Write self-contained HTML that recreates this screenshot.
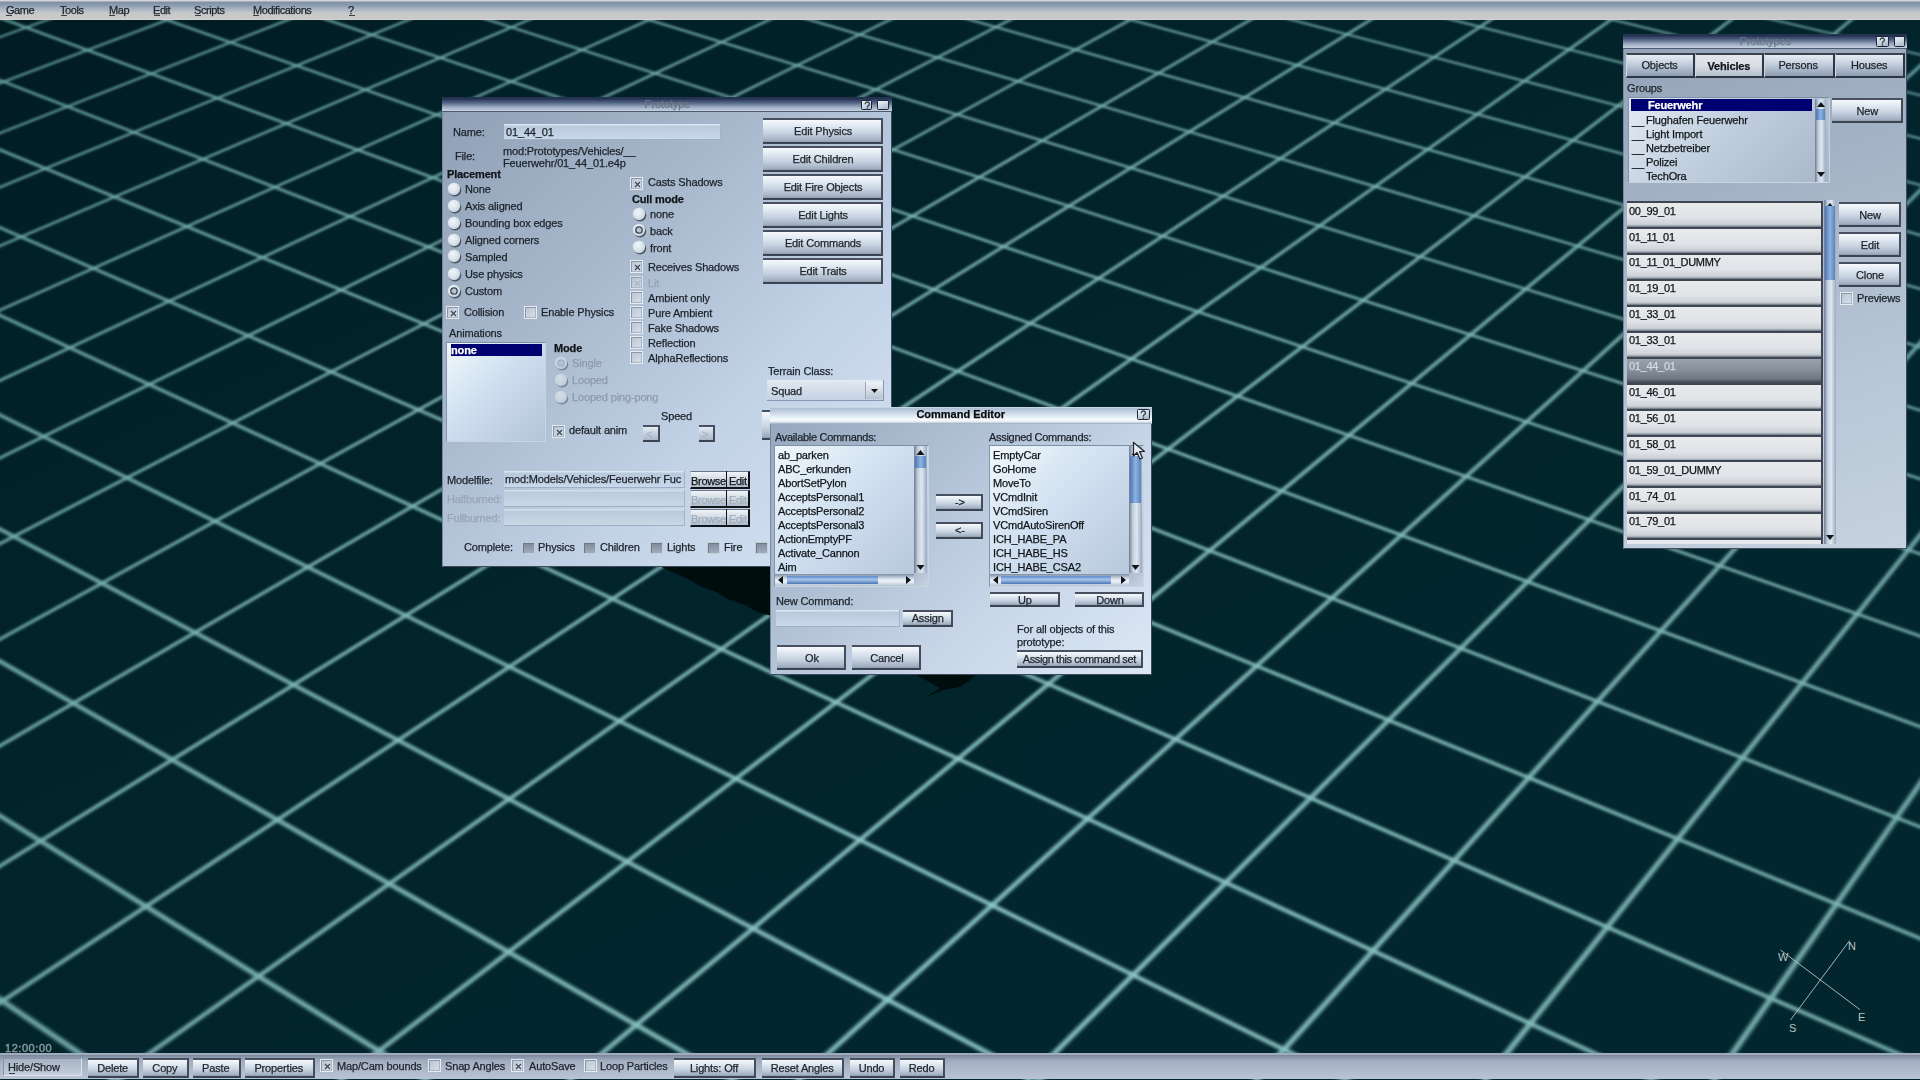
<!DOCTYPE html><html><head><meta charset="utf-8"><style>*{margin:0;padding:0;box-sizing:border-box}
html,body{width:1920px;height:1080px;overflow:hidden}
body{position:relative;background:#01202a;font-family:"Liberation Sans",sans-serif;font-size:11px;color:#1c222a}
.a{position:absolute}
.t{position:absolute;white-space:nowrap;letter-spacing:-0.15px}
#bg{position:absolute;left:0;top:0}
#menubar{position:absolute;left:0;top:0;width:1920px;height:20px;background:linear-gradient(#d4d8dc 0px,#d0d4da 1px,#7e8ea6 2px,#8a9ab0 5px,#a8b4c2 9px,#c2c9cc 13px,#c8c8c8 14px,#cacaca 19px,#d8dcdc 20px)}
#toolbar{position:absolute;left:0;top:1053px;width:1920px;height:26px;background:linear-gradient(#a4aebc 0px,#a0aab8 1.5px,#7a8aa0 2.5px,#8896aa 4px,#a2aec0 8px,#aab6c8 50%,#b8c4d4 100%)}
.win{position:absolute;background:linear-gradient(135deg,#8fa0b6 0%,#a8b8cc 35%,#c2d2e6 65%,#d6e4f4 100%);border-left:1px solid #7a889c;border-right:1px solid #3c4c62;border-bottom:1px solid #404a5c}
.tbar{position:absolute;background:linear-gradient(#2e405a 0px,#1c2a48 1px,#56678a 6px,#9aaac0 10px,#c6d2e2 14px,#4c5a72 14px,#4c5a72 15px)}
.tbar.act{background:linear-gradient(#e6ecf2 0px,#aebed4 1px,#c4d2e2 5px,#e6f0f6 10px,#fafcfc 13px,#e0e8f0 15px,#b8c6d6 16px,#98a8be 17px)}
.btn{border-top:2px solid #485060;border-bottom:2px solid #3c4452;border-right:2px solid #444c5a;
 background:linear-gradient(#f6f9fc 0%,#e2eaf2 25%,#c6d2e0 60%,#a2b0c2 92%,#8c9aae 100%)}
.tbtn{border:1px solid #1e2636;border-radius:1.5px;background:linear-gradient(160deg,#eef4f8,#c4d0dc 60%,#a4b4c8)}
.inp{background:linear-gradient(#dde6ee 0px,#dde6ee 1px,#b9c9dc 2px,#c9d8ea 100%);border-right:1px solid #a4b4c8;border-bottom:1px solid #a0b0c4}
.inp.dis{background:linear-gradient(#d4dde8 0px,#d4dde8 1px,#bccbdc 2px,#c8d6e6 100%)}
.cb{border:1px solid #e6ecf2;box-shadow:inset 1px 1px 0 #8c96a4, inset -1px -1px 0 #aab4c2;background:linear-gradient(135deg,#b8c4d2,#d8e2ec)}
.cb.dis{opacity:0.75}
.cbf{border:1px solid #c4ced8;box-shadow:inset 1px 1px 0 #6e7886;background:linear-gradient(#7e8a9a,#a2acba)}
.list{background:linear-gradient(135deg,#f0f8fc 0%,#cfdff0 45%,#b4c4d8 100%);border-top:1px solid #7e8ea4;border-left:1px solid #8494aa;border-right:1px solid #c8d4e2;border-bottom:1px solid #c8d4e2}
.sel{background:#000070}
.vsb{background:linear-gradient(90deg,#6c7c94,#c4d0de 30%,#dfe8f2 60%,#9aa8bc)}
.thumb{background:linear-gradient(90deg,#4d76b4,#8eb2e0 50%,#5a84c0)}
.hthumb{background:linear-gradient(#5d8ac8,#a6c4ea 45%,#4a78b8)}
.hsb{background:linear-gradient(#7d8ca2,#d8e2ee 40%,#f0f4fa 60%,#b4c2d2)}
.item{border-top:2px solid #3e4654;border-right:2px solid #3e4654;background:linear-gradient(#e8eaec 0%,#e0e3e7 60%,#cdd2d8 88%,#9aa2ac 96%,#5a6270 100%)}
.item.on{background:linear-gradient(#9aa2ae 0%,#848c98 50%,#6c7480 85%,#505866 92%,#404854 100%)}
.tab{border-top:2px solid #3a4250;border-right:2px solid #2e3644;border-bottom:2px solid #2e3644;border-left:1px solid #d0d8e2;background:linear-gradient(#e6ecf2 0%,#c2cedc 45%,#8e9cb2 100%)}
.tab.on{background:linear-gradient(#e4e6e8 0%,#d8dee6 50%,#b4c0ce 100%)}
.t{will-change:transform;-webkit-text-stroke:0.25px currentColor}
</style></head><body>
<svg id="bg" width="1920" height="1080" viewBox="0 0 1920 1080"><defs><linearGradient id="bgg" gradientUnits="userSpaceOnUse" x1="0" y1="0" x2="500" y2="1100"><stop offset="0" stop-color="#011b21"/><stop offset="0.25" stop-color="#012128"/><stop offset="1" stop-color="#02262d"/></linearGradient><filter id="blur2" x="-5%" y="-5%" width="110%" height="110%"><feGaussianBlur stdDeviation="2.2"/></filter><linearGradient id="mg" gradientUnits="userSpaceOnUse" x1="0" y1="300" x2="0" y2="1080"><stop offset="0" stop-color="#000"/><stop offset="1" stop-color="#fff"/></linearGradient><mask id="m" maskUnits="userSpaceOnUse" x="0" y="0" width="1920" height="1080"><rect width="1920" height="1080" fill="url(#mg)"/></mask><filter id="blur" x="-5%" y="-5%" width="110%" height="110%"><feGaussianBlur stdDeviation="0.8"/></filter><filter id="sblur"><feGaussianBlur stdDeviation="0.7"/></filter><radialGradient id="rg" cx="0.4" cy="0.35" r="0.7"><stop offset="0" stop-color="#f2f6fa"/><stop offset="0.7" stop-color="#d6e0ea"/><stop offset="1" stop-color="#b8c4d2"/></radialGradient><radialGradient id="lg" gradientUnits="userSpaceOnUse" cx="1000" cy="950" r="1400"><stop offset="0" stop-color="#90caca"/><stop offset="0.6" stop-color="#7cb2b2"/><stop offset="1" stop-color="#66a2a2"/></radialGradient></defs><rect width="1920" height="1080" fill="url(#bgg)"/><g filter="url(#blur)" fill="url(#lg)"><polygon opacity="0.30" points="11.6,-11.3 -30.5,3.4 -29.5,6.1 12.6,-8.7"/>
<polygon opacity="0.80" points="11.8,-10.8 -30.3,3.9 -29.7,5.6 12.4,-9.2"/>
<polygon opacity="0.30" points="128.9,-11.4 -30.5,46.5 -29.5,49.4 129.9,-8.6"/>
<polygon opacity="0.80" points="129.1,-10.9 -30.3,47.1 -29.7,48.8 129.8,-9.1"/>
<polygon opacity="0.30" points="246.2,-11.4 -30.6,93.0 -29.4,96.0 247.3,-8.6"/>
<polygon opacity="0.80" points="246.4,-10.9 -30.3,93.6 -29.7,95.4 247.1,-9.1"/>
<polygon opacity="0.30" points="363.5,-11.4 -30.6,143.3 -29.4,146.4 364.6,-8.6"/>
<polygon opacity="0.80" points="363.7,-10.9 -30.4,143.9 -29.6,145.8 364.4,-9.1"/>
<polygon opacity="0.30" points="480.8,-11.4 -30.7,197.8 -29.3,201.0 481.9,-8.6"/>
<polygon opacity="0.80" points="481.0,-10.9 -30.4,198.4 -29.6,200.3 481.7,-9.1"/>
<polygon opacity="0.30" points="598.0,-11.5 -30.7,257.0 -29.3,260.4 599.2,-8.5"/>
<polygon opacity="0.80" points="598.2,-10.9 -30.4,257.7 -29.6,259.7 599.0,-9.1"/>
<polygon opacity="0.30" points="715.2,-11.5 -30.8,321.7 -29.2,325.3 716.5,-8.5"/>
<polygon opacity="0.80" points="715.5,-10.9 -30.5,322.5 -29.5,324.5 716.3,-9.1"/>
<polygon opacity="0.30" points="832.4,-11.5 -30.9,392.6 -29.1,396.4 833.8,-8.5"/>
<polygon opacity="0.80" points="832.7,-10.9 -30.5,393.4 -29.5,395.6 833.5,-9.1"/>
<polygon opacity="0.30" points="949.5,-11.5 -31.0,470.7 -29.0,474.7 951.0,-8.5"/>
<polygon opacity="0.80" points="949.8,-10.9 -30.6,471.6 -29.4,473.8 950.7,-9.1"/>
<polygon opacity="0.30" points="1066.6,-11.6 -31.1,557.1 -28.9,561.4 1068.3,-8.4"/>
<polygon opacity="0.80" points="1067.0,-10.9 -30.6,558.1 -29.4,560.4 1067.9,-9.1"/>
<polygon opacity="0.30" points="1183.7,-11.6 -31.3,653.2 -28.7,657.8 1185.5,-8.4"/>
<polygon opacity="0.80" points="1184.1,-10.9 -30.7,654.3 -29.3,656.7 1185.1,-9.1"/>
<polygon opacity="0.30" points="1300.8,-11.6 -31.4,760.8 -28.6,765.7 1302.7,-8.4"/>
<polygon opacity="0.80" points="1301.2,-11.0 -30.8,761.9 -29.2,764.5 1302.3,-9.0"/>
<polygon opacity="0.30" points="1417.8,-11.7 -31.6,882.0 -28.4,887.3 1419.9,-8.3"/>
<polygon opacity="0.80" points="1418.3,-11.0 -30.9,883.2 -29.1,886.0 1419.5,-9.0"/>
<polygon opacity="0.30" points="1534.8,-11.7 -31.9,1019.6 -28.1,1025.3 1537.1,-8.3"/>
<polygon opacity="0.80" points="1535.3,-11.0 -31.0,1021.0 -29.0,1023.9 1536.6,-9.0"/>
<polygon opacity="0.30" points="1651.8,-11.7 67.2,1107.0 71.5,1113.0 1654.3,-8.3"/>
<polygon opacity="0.80" points="1652.4,-11.0 68.3,1108.5 70.4,1111.5 1653.7,-9.0"/>
<polygon opacity="0.30" points="1768.8,-11.7 299.1,1106.9 303.8,1113.1 1771.4,-8.3"/>
<polygon opacity="0.80" points="1769.3,-11.0 300.3,1108.5 302.6,1111.5 1770.8,-9.0"/>
<polygon opacity="0.30" points="1885.7,-11.7 531.0,1106.9 536.1,1113.1 1888.6,-8.3"/>
<polygon opacity="0.80" points="1886.3,-11.0 532.2,1108.5 534.8,1111.5 1887.9,-9.0"/>
<polygon opacity="0.30" points="1948.4,37.1 762.7,1106.9 768.4,1113.1 1951.6,40.8"/>
<polygon opacity="0.80" points="1949.1,38.0 764.2,1108.5 767.0,1111.5 1950.9,39.9"/>
<polygon opacity="0.30" points="1948.1,158.6 994.4,1106.9 1000.6,1113.1 1951.9,162.5"/>
<polygon opacity="0.80" points="1949.0,159.5 996.0,1108.5 999.1,1111.5 1951.0,161.6"/>
<polygon opacity="0.30" points="1947.7,307.8 1226.1,1106.9 1232.9,1113.1 1952.3,312.0"/>
<polygon opacity="0.80" points="1948.8,308.8 1227.8,1108.5 1231.2,1111.5 1951.2,311.0"/>
<polygon opacity="0.30" points="1947.2,495.4 1457.6,1107.0 1465.1,1113.0 1952.8,499.9"/>
<polygon opacity="0.80" points="1948.6,496.5 1459.5,1108.5 1463.2,1111.5 1951.4,498.8"/>
<polygon opacity="0.30" points="1946.5,738.3 1689.1,1107.1 1697.4,1112.9 1953.5,743.2"/>
<polygon opacity="0.80" points="1948.3,739.5 1691.2,1108.6 1695.3,1111.4 1951.7,741.9"/>
<polygon opacity="0.30" points="1945.6,1065.3 1920.6,1107.3 1929.6,1112.7 1954.4,1070.6"/>
<polygon opacity="0.80" points="1947.9,1066.7 1922.9,1108.7 1927.2,1111.3 1952.1,1069.2"/>
<polygon opacity="0.30" points="1803.8,-8.7 1949.7,24.9 1950.3,22.2 1804.4,-11.3"/>
<polygon opacity="0.80" points="1803.9,-9.2 1949.8,24.4 1950.2,22.7 1804.2,-10.8"/>
<polygon opacity="0.30" points="1647.3,-8.7 1949.7,63.1 1950.3,60.4 1648.0,-11.3"/>
<polygon opacity="0.80" points="1647.4,-9.2 1949.8,62.6 1950.2,60.9 1647.8,-10.8"/>
<polygon opacity="0.30" points="1490.9,-8.7 1949.6,104.0 1950.4,101.1 1491.5,-11.3"/>
<polygon opacity="0.80" points="1491.0,-9.1 1949.8,103.4 1950.2,101.6 1491.4,-10.9"/>
<polygon opacity="0.30" points="1334.3,-8.6 1949.6,147.6 1950.4,144.7 1335.0,-11.4"/>
<polygon opacity="0.80" points="1334.5,-9.1 1949.8,147.1 1950.2,145.2 1334.9,-10.9"/>
<polygon opacity="0.30" points="1177.8,-8.6 1949.6,194.5 1950.4,191.4 1178.5,-11.4"/>
<polygon opacity="0.80" points="1177.9,-9.1 1949.8,193.9 1950.2,192.0 1178.4,-10.9"/>
<polygon opacity="0.30" points="1021.2,-8.6 1949.6,244.8 1950.4,241.5 1022.0,-11.4"/>
<polygon opacity="0.80" points="1021.4,-9.1 1949.7,244.2 1950.3,242.2 1021.8,-10.9"/>
<polygon opacity="0.30" points="864.6,-8.5 1949.5,299.1 1950.5,295.6 865.4,-11.5"/>
<polygon opacity="0.80" points="864.7,-9.1 1949.7,298.4 1950.3,296.3 865.2,-10.9"/>
<polygon opacity="0.30" points="707.9,-8.5 1949.5,357.7 1950.5,354.1 708.8,-11.5"/>
<polygon opacity="0.80" points="708.1,-9.1 1949.7,356.9 1950.3,354.8 708.6,-10.9"/>
<polygon opacity="0.30" points="551.2,-8.5 1949.4,421.3 1950.6,417.5 552.1,-11.5"/>
<polygon opacity="0.80" points="551.4,-9.1 1949.7,420.5 1950.3,418.3 552.0,-10.9"/>
<polygon opacity="0.30" points="394.5,-8.4 1949.4,490.5 1950.6,486.4 395.5,-11.6"/>
<polygon opacity="0.80" points="394.7,-9.1 1949.6,489.6 1950.4,487.3 395.3,-10.9"/>
<polygon opacity="0.30" points="237.7,-8.4 1949.3,566.0 1950.7,561.7 238.7,-11.6"/>
<polygon opacity="0.80" points="237.9,-9.0 1949.6,565.1 1950.4,562.7 238.5,-11.0"/>
<polygon opacity="0.30" points="80.8,-8.4 1949.2,648.9 1950.8,644.3 82.0,-11.6"/>
<polygon opacity="0.80" points="81.1,-9.0 1949.6,647.8 1950.4,645.3 81.8,-11.0"/>
<polygon opacity="0.30" points="-30.6,8.5 1949.1,740.1 1950.9,735.2 -29.4,5.1"/>
<polygon opacity="0.80" points="-30.4,7.8 1949.5,739.0 1950.5,736.3 -29.6,5.8"/>
<polygon opacity="0.30" points="-30.7,70.5 1949.0,841.1 1951.0,835.8 -29.3,66.8"/>
<polygon opacity="0.80" points="-30.4,69.7 1949.5,839.9 1950.5,837.1 -29.6,67.6"/>
<polygon opacity="0.30" points="-30.8,139.5 1948.8,953.5 1951.2,947.8 -29.2,135.6"/>
<polygon opacity="0.80" points="-30.5,138.6 1949.4,952.2 1950.6,949.2 -29.5,136.4"/>
<polygon opacity="0.30" points="-30.9,216.7 1948.6,1079.4 1951.4,1073.2 -29.1,212.5"/>
<polygon opacity="0.80" points="-30.5,215.8 1949.3,1077.9 1950.7,1074.7 -29.5,213.5"/>
<polygon opacity="0.30" points="-31.0,303.8 1715.5,1113.3 1718.5,1106.7 -29.0,299.3"/>
<polygon opacity="0.80" points="-30.6,302.7 1716.2,1111.7 1717.7,1108.3 -29.4,300.3"/>
<polygon opacity="0.30" points="-31.2,402.7 1404.7,1113.4 1408.0,1106.6 -28.8,397.8"/>
<polygon opacity="0.80" points="-30.6,401.5 1405.5,1111.7 1407.2,1108.3 -29.4,398.9"/>
<polygon opacity="0.30" points="-31.4,516.0 1093.8,1113.5 1097.6,1106.5 -28.6,510.6"/>
<polygon opacity="0.80" points="-30.7,514.7 1094.8,1111.8 1096.6,1108.2 -29.3,511.9"/>
<polygon opacity="0.30" points="-31.7,647.1 782.9,1113.6 787.0,1106.4 -28.3,641.2"/>
<polygon opacity="0.80" points="-30.9,645.7 783.9,1111.8 786.0,1108.2 -29.1,642.6"/>
<polygon opacity="0.30" points="-32.0,800.6 471.8,1113.7 476.4,1106.3 -28.0,794.0"/>
<polygon opacity="0.80" points="-31.0,798.9 473.0,1111.8 475.3,1108.2 -29.0,795.6"/>
<polygon opacity="0.30" points="-32.5,982.6 160.6,1113.8 165.8,1106.2 -27.5,975.3"/>
<polygon opacity="0.80" points="-31.2,980.8 161.9,1111.9 164.5,1108.1 -28.8,977.2"/></g><g filter="url(#sblur)" fill="#000b0e"><polygon points="659.7,566 770,566 770,615.5 757,612 745,605 730,600 716,592 700,586 686,578 672,572"/><polygon points="915,674 977,674 969,681 961,686.5 944,690 927,696.5 940,688 931,683"/></g><g stroke="#b8c4c8" stroke-width="1" opacity="0.9"><line x1="1790.5" y1="1020" x2="1849.7" y2="940.5"/><line x1="1780.5" y1="950" x2="1860" y2="1009.7"/></g><g fill="#b8c4c8" font-family="Liberation Sans" font-size="11"><text x="1848" y="950">N</text><text x="1858" y="1021">E</text><text x="1789" y="1032">S</text><text x="1778" y="961">W</text></g></svg>
<div class="t " style="left:5.0px;top:1040.7px;font-size:11px;line-height:14px;color:#84949a;letter-spacing:0.55px;-webkit-text-stroke:0.5px #84949a;">12:00:00</div>
<div id="menubar"></div>
<div class="t " style="left:5.8px;top:2.5px;font-size:11px;line-height:14px;color:#20262e;letter-spacing:-0.45px;">Game</div>
<div class="a " style="left:6.3px;top:15.0px;width:6.0px;height:1.0px;background:#3a4048"></div>
<div class="t " style="left:60.0px;top:2.5px;font-size:11px;line-height:14px;color:#20262e;letter-spacing:-0.45px;">Tools</div>
<div class="a " style="left:60.5px;top:15.0px;width:6.0px;height:1.0px;background:#3a4048"></div>
<div class="t " style="left:108.8px;top:2.5px;font-size:11px;line-height:14px;color:#20262e;letter-spacing:-0.45px;">Map</div>
<div class="a " style="left:109.2px;top:15.0px;width:6.0px;height:1.0px;background:#3a4048"></div>
<div class="t " style="left:153.0px;top:2.5px;font-size:11px;line-height:14px;color:#20262e;letter-spacing:-0.45px;">Edit</div>
<div class="a " style="left:153.5px;top:15.0px;width:6.0px;height:1.0px;background:#3a4048"></div>
<div class="t " style="left:194.2px;top:2.5px;font-size:11px;line-height:14px;color:#20262e;letter-spacing:-0.45px;">Scripts</div>
<div class="a " style="left:194.7px;top:15.0px;width:6.0px;height:1.0px;background:#3a4048"></div>
<div class="t " style="left:252.7px;top:2.5px;font-size:11px;line-height:14px;color:#20262e;letter-spacing:-0.45px;">Modifications</div>
<div class="a " style="left:253.2px;top:15.0px;width:6.0px;height:1.0px;background:#3a4048"></div>
<div class="t " style="left:348.3px;top:2.5px;font-size:11px;line-height:14px;color:#20262e;letter-spacing:-0.45px;">?</div>
<div class="a " style="left:348.8px;top:15.0px;width:6.0px;height:1.0px;background:#3a4048"></div>
<div id="toolbar"></div>
<div class="a " style="left:2.5px;top:1058.0px;width:79.5px;height:18.0px;background:linear-gradient(#a6b2c4,#c4ceda);border-top:1px solid #8894a8;border-left:1px solid #8894a8;border-bottom:1px solid #dce4ec;border-right:1px solid #dce4ec"></div>
<div class="t " style="left:8.0px;top:1060.2px;font-size:11px;line-height:14px;color:#20262e;">Hide/Show</div>
<div class="a " style="left:8.5px;top:1073.0px;width:6.5px;height:1.0px;background:#3a4048"></div>
<div class="a btn" style="left:87.5px;top:1057.5px;width:51.2px;height:20.0px;"></div>
<div class="t" style="left:87.5px;top:1061.2px;width:49.2px;text-align:center;font-size:11px;line-height:14px;color:#20262e;">Delete</div>
<div class="a btn" style="left:143.0px;top:1057.5px;width:45.8px;height:20.0px;"></div>
<div class="t" style="left:143.0px;top:1061.2px;width:43.8px;text-align:center;font-size:11px;line-height:14px;color:#20262e;">Copy</div>
<div class="a btn" style="left:193.0px;top:1057.5px;width:47.5px;height:20.0px;"></div>
<div class="t" style="left:193.0px;top:1061.2px;width:45.5px;text-align:center;font-size:11px;line-height:14px;color:#20262e;">Paste</div>
<div class="a btn" style="left:245.0px;top:1057.5px;width:69.5px;height:20.0px;"></div>
<div class="t" style="left:245.0px;top:1061.2px;width:67.5px;text-align:center;font-size:11px;line-height:14px;color:#20262e;">Properties</div>
<div class="a btn" style="left:674.3px;top:1057.5px;width:82.1px;height:20.0px;"></div>
<div class="t" style="left:674.3px;top:1061.2px;width:80.1px;text-align:center;font-size:11px;line-height:14px;color:#20262e;">Lights: Off</div>
<div class="a btn" style="left:761.8px;top:1057.5px;width:82.3px;height:20.0px;"></div>
<div class="t" style="left:761.8px;top:1061.2px;width:80.3px;text-align:center;font-size:11px;line-height:14px;color:#20262e;">Reset Angles</div>
<div class="a btn" style="left:849.5px;top:1057.5px;width:45.0px;height:20.0px;"></div>
<div class="t" style="left:849.5px;top:1061.2px;width:43.0px;text-align:center;font-size:11px;line-height:14px;color:#20262e;">Undo</div>
<div class="a btn" style="left:899.9px;top:1057.5px;width:45.2px;height:20.0px;"></div>
<div class="t" style="left:899.9px;top:1061.2px;width:43.2px;text-align:center;font-size:11px;line-height:14px;color:#20262e;">Redo</div>
<div class="a cb" style="left:319.5px;top:1059.0px;width:13.0px;height:13.0px;"><svg width="13" height="13" style="position:absolute;left:0;top:0"><path d="M4 4L9 9M9 4L4 9" stroke="#3a4250" stroke-width="1.1"/></svg></div>
<div class="t " style="left:337.0px;top:1058.7px;font-size:11px;line-height:14px;color:#20262e;">Map/Cam bounds</div>
<div class="a cb" style="left:427.5px;top:1059.0px;width:13.0px;height:13.0px;"></div>
<div class="t " style="left:445.0px;top:1058.7px;font-size:11px;line-height:14px;color:#20262e;">Snap Angles</div>
<div class="a cb" style="left:511.0px;top:1059.0px;width:13.0px;height:13.0px;"><svg width="13" height="13" style="position:absolute;left:0;top:0"><path d="M4 4L9 9M9 4L4 9" stroke="#3a4250" stroke-width="1.1"/></svg></div>
<div class="t " style="left:528.8px;top:1058.7px;font-size:11px;line-height:14px;color:#20262e;">AutoSave</div>
<div class="a cb" style="left:583.6px;top:1059.0px;width:13.0px;height:13.0px;"></div>
<div class="t " style="left:600.3px;top:1058.7px;font-size:11px;line-height:14px;color:#20262e;">Loop Particles</div>
<div class="a win" style="left:441.5px;top:97.0px;width:450.5px;height:469.5px;"></div>
<div class="a tbar" style="left:441.5px;top:97.0px;width:450.5px;height:15.0px;"></div>
<div class="t" style="left:441.5px;top:96.7px;width:450.5px;text-align:center;font-size:11px;line-height:14px;color:#6a7484;">Prototype</div>
<div class="a tbtn" style="left:861.0px;top:99.5px;width:11.0px;height:10.3px;"><svg width="11" height="10" style="position:absolute;left:0;top:0"><path d="M3.2 3.2C3.2 1.6 4.2 1 5.3 1C6.6 1 7.4 1.8 7.4 2.9C7.4 4.1 6.3 4.5 5.6 5.2L5.4 6.6" fill="none" stroke="#3a4250" stroke-width="1.3"/><rect x="4.7" y="7.4" width="1.4" height="1.4" fill="#3a4250"/></svg></div>
<div class="a tbtn" style="left:877.0px;top:99.5px;width:12.0px;height:10.3px;"></div>
<div class="t " style="left:453.0px;top:124.8px;font-size:11px;line-height:14px;color:#1c222a;">Name:</div>
<div class="a inp" style="left:504.3px;top:124.3px;width:216.7px;height:15.7px;"></div>
<div class="t " style="left:505.5px;top:124.9px;font-size:11px;line-height:14px;color:#1c222a;">01_44_01</div>
<div class="t " style="left:454.8px;top:148.6px;font-size:11px;line-height:14px;color:#1c222a;">File:</div>
<div class="t " style="left:503.0px;top:143.6px;font-size:11px;line-height:14px;color:#1c222a;">mod:Prototypes/Vehicles/__</div>
<div class="t " style="left:503.0px;top:156.1px;font-size:11px;line-height:14px;color:#1c222a;">Feuerwehr/01_44_01.e4p</div>
<div class="t " style="left:447.0px;top:166.7px;font-size:11px;line-height:14px;color:#101418;font-weight:bold;">Placement</div>
<svg class="a" width="16" height="16" style="left:447.0px;top:182.1px;"><circle cx="8" cy="8.3" r="6.2" fill="#3a404a" opacity="0.85"/><circle cx="7" cy="7" r="6.2" fill="url(#rg)"/></svg>
<div class="t " style="left:465.0px;top:182.3px;font-size:11px;line-height:14px;color:#1c222a;">None</div>
<svg class="a" width="16" height="16" style="left:447.0px;top:198.9px;"><circle cx="8" cy="8.3" r="6.2" fill="#3a404a" opacity="0.85"/><circle cx="7" cy="7" r="6.2" fill="url(#rg)"/></svg>
<div class="t " style="left:465.0px;top:199.1px;font-size:11px;line-height:14px;color:#1c222a;">Axis aligned</div>
<svg class="a" width="16" height="16" style="left:447.0px;top:215.9px;"><circle cx="8" cy="8.3" r="6.2" fill="#3a404a" opacity="0.85"/><circle cx="7" cy="7" r="6.2" fill="url(#rg)"/></svg>
<div class="t " style="left:465.0px;top:216.1px;font-size:11px;line-height:14px;color:#1c222a;">Bounding box edges</div>
<svg class="a" width="16" height="16" style="left:447.0px;top:232.8px;"><circle cx="8" cy="8.3" r="6.2" fill="#3a404a" opacity="0.85"/><circle cx="7" cy="7" r="6.2" fill="url(#rg)"/></svg>
<div class="t " style="left:465.0px;top:233.0px;font-size:11px;line-height:14px;color:#1c222a;">Aligned corners</div>
<svg class="a" width="16" height="16" style="left:447.0px;top:249.3px;"><circle cx="8" cy="8.3" r="6.2" fill="#3a404a" opacity="0.85"/><circle cx="7" cy="7" r="6.2" fill="url(#rg)"/></svg>
<div class="t " style="left:465.0px;top:249.5px;font-size:11px;line-height:14px;color:#1c222a;">Sampled</div>
<svg class="a" width="16" height="16" style="left:447.0px;top:266.6px;"><circle cx="8" cy="8.3" r="6.2" fill="#3a404a" opacity="0.85"/><circle cx="7" cy="7" r="6.2" fill="url(#rg)"/></svg>
<div class="t " style="left:465.0px;top:266.8px;font-size:11px;line-height:14px;color:#1c222a;">Use physics</div>
<svg class="a" width="16" height="16" style="left:447.0px;top:283.9px;"><circle cx="8" cy="8.3" r="6.2" fill="#3a404a" opacity="0.85"/><circle cx="7" cy="7" r="6.2" fill="url(#rg)"/><circle cx="7" cy="7" r="3.2" fill="#b8c4d2" stroke="#3c4450" stroke-width="1.3"/></svg>
<div class="t " style="left:465.0px;top:284.1px;font-size:11px;line-height:14px;color:#1c222a;">Custom</div>
<div class="a cb" style="left:446.3px;top:306.0px;width:13.0px;height:13.0px;"><svg width="13" height="13" style="position:absolute;left:0;top:0"><path d="M4 4L9 9M9 4L4 9" stroke="#3a4250" stroke-width="1.1"/></svg></div>
<div class="t " style="left:464.0px;top:305.2px;font-size:11px;line-height:14px;color:#1c222a;">Collision</div>
<div class="a cb" style="left:523.5px;top:306.0px;width:13.0px;height:13.0px;"></div>
<div class="t " style="left:540.7px;top:305.2px;font-size:11px;line-height:14px;color:#1c222a;">Enable Physics</div>
<div class="t " style="left:448.5px;top:325.9px;font-size:11px;line-height:14px;color:#1c222a;">Animations</div>
<div class="a list" style="left:446.2px;top:342.1px;width:100.1px;height:99.7px;"></div>
<div class="a sel" style="left:450.6px;top:343.6px;width:91.8px;height:12.7px;"></div>
<div class="t " style="left:450.6px;top:342.7px;font-size:11px;line-height:14px;color:#ffffff;font-weight:bold;">none</div>
<div class="t " style="left:554.0px;top:340.6px;font-size:11px;line-height:14px;color:#101418;font-weight:bold;">Mode</div>
<svg class="a" width="16" height="16" style="left:554.0px;top:355.5px;opacity:0.55;"><circle cx="8" cy="8.3" r="6.2" fill="#3a404a" opacity="0.85"/><circle cx="7" cy="7" r="6.2" fill="url(#rg)"/><circle cx="7" cy="7" r="3.2" fill="#b8c4d2" stroke="#9aa4b2" stroke-width="1.3"/></svg>
<div class="t " style="left:572.0px;top:355.7px;font-size:11px;line-height:14px;color:#8e9aaa;">Single</div>
<svg class="a" width="16" height="16" style="left:554.0px;top:372.7px;opacity:0.55;"><circle cx="8" cy="8.3" r="6.2" fill="#3a404a" opacity="0.85"/><circle cx="7" cy="7" r="6.2" fill="url(#rg)"/></svg>
<div class="t " style="left:572.0px;top:372.9px;font-size:11px;line-height:14px;color:#8e9aaa;">Looped</div>
<svg class="a" width="16" height="16" style="left:554.0px;top:389.5px;opacity:0.55;"><circle cx="8" cy="8.3" r="6.2" fill="#3a404a" opacity="0.85"/><circle cx="7" cy="7" r="6.2" fill="url(#rg)"/></svg>
<div class="t " style="left:572.0px;top:389.7px;font-size:11px;line-height:14px;color:#8e9aaa;">Looped ping-pong</div>
<div class="t " style="left:661.0px;top:408.8px;font-size:11px;line-height:14px;color:#1c222a;">Speed</div>
<div class="a cb" style="left:551.6px;top:424.5px;width:13.0px;height:13.0px;"><svg width="13" height="13" style="position:absolute;left:0;top:0"><path d="M4 4L9 9M9 4L4 9" stroke="#3a4250" stroke-width="1.1"/></svg></div>
<div class="t " style="left:569.0px;top:423.2px;font-size:11px;line-height:14px;color:#1c222a;">default anim</div>
<div class="a btn" style="left:643.3px;top:424.5px;width:16.8px;height:17.3px;border-width:2px 2px 2px 0;background:linear-gradient(#e4ecf4,#a8b6c8)"><div class="t" style="left:3px;top:1px;font-size:11px;color:#a8b4c4">&lt;</div></div>
<div class="a btn" style="left:698.5px;top:424.5px;width:16.9px;height:17.3px;border-width:2px 2px 2px 0;background:linear-gradient(#e4ecf4,#a8b6c8)"><div class="t" style="left:3px;top:1px;font-size:11px;color:#a8b4c4">&gt;</div></div>
<div class="a cb" style="left:630.0px;top:176.5px;width:13.0px;height:13.0px;"><svg width="13" height="13" style="position:absolute;left:0;top:0"><path d="M4 4L9 9M9 4L4 9" stroke="#3a4250" stroke-width="1.1"/></svg></div>
<div class="t " style="left:647.8px;top:175.2px;font-size:11px;line-height:14px;color:#1c222a;">Casts Shadows</div>
<div class="t " style="left:632.2px;top:191.6px;font-size:11px;line-height:14px;color:#101418;font-weight:bold;">Cull mode</div>
<svg class="a" width="16" height="16" style="left:631.9px;top:206.8px;"><circle cx="8" cy="8.3" r="6.2" fill="#3a404a" opacity="0.85"/><circle cx="7" cy="7" r="6.2" fill="url(#rg)"/></svg>
<div class="t " style="left:650.0px;top:207.0px;font-size:11px;line-height:14px;color:#1c222a;">none</div>
<svg class="a" width="16" height="16" style="left:631.9px;top:223.4px;"><circle cx="8" cy="8.3" r="6.2" fill="#3a404a" opacity="0.85"/><circle cx="7" cy="7" r="6.2" fill="url(#rg)"/><circle cx="7" cy="7" r="3.2" fill="#b8c4d2" stroke="#3c4450" stroke-width="1.3"/></svg>
<div class="t " style="left:650.0px;top:223.6px;font-size:11px;line-height:14px;color:#1c222a;">back</div>
<svg class="a" width="16" height="16" style="left:631.9px;top:240.3px;"><circle cx="8" cy="8.3" r="6.2" fill="#3a404a" opacity="0.85"/><circle cx="7" cy="7" r="6.2" fill="url(#rg)"/></svg>
<div class="t " style="left:650.0px;top:240.5px;font-size:11px;line-height:14px;color:#1c222a;">front</div>
<div class="a cb" style="left:630.0px;top:260.2px;width:13.0px;height:13.0px;"><svg width="13" height="13" style="position:absolute;left:0;top:0"><path d="M4 4L9 9M9 4L4 9" stroke="#3a4250" stroke-width="1.1"/></svg></div>
<div class="t " style="left:647.8px;top:259.9px;font-size:11px;line-height:14px;color:#1c222a;">Receives Shadows</div>
<div class="a cb dis" style="left:630.0px;top:276.2px;width:13.0px;height:13.0px;"><svg width="13" height="13" style="position:absolute;left:0;top:0"><path d="M4 4L9 9M9 4L4 9" stroke="#a8b0bc" stroke-width="1.1"/></svg></div>
<div class="t " style="left:647.8px;top:275.9px;font-size:11px;line-height:14px;color:#98a4b2;">Lit</div>
<div class="a cb" style="left:630.0px;top:291.3px;width:13.0px;height:13.0px;"></div>
<div class="t " style="left:647.8px;top:291.0px;font-size:11px;line-height:14px;color:#1c222a;">Ambient only</div>
<div class="a cb" style="left:630.0px;top:306.2px;width:13.0px;height:13.0px;"></div>
<div class="t " style="left:647.8px;top:305.9px;font-size:11px;line-height:14px;color:#1c222a;">Pure Ambient</div>
<div class="a cb" style="left:630.0px;top:321.1px;width:13.0px;height:13.0px;"></div>
<div class="t " style="left:647.8px;top:320.8px;font-size:11px;line-height:14px;color:#1c222a;">Fake Shadows</div>
<div class="a cb" style="left:630.0px;top:335.9px;width:13.0px;height:13.0px;"></div>
<div class="t " style="left:647.8px;top:335.6px;font-size:11px;line-height:14px;color:#1c222a;">Reflection</div>
<div class="a cb" style="left:630.0px;top:351.3px;width:13.0px;height:13.0px;"></div>
<div class="t " style="left:647.8px;top:351.0px;font-size:11px;line-height:14px;color:#1c222a;">AlphaReflections</div>
<div class="a btn" style="left:762.5px;top:118.0px;width:120.1px;height:26.0px;"></div><div class="t" style="left:762.5px;top:124.2px;width:120.1px;text-align:center;font-size:11px;line-height:14px;color:#1c222a;">Edit Physics</div>
<div class="a btn" style="left:762.5px;top:146.0px;width:120.1px;height:26.0px;"></div><div class="t" style="left:762.5px;top:152.2px;width:120.1px;text-align:center;font-size:11px;line-height:14px;color:#1c222a;">Edit Children</div>
<div class="a btn" style="left:762.5px;top:174.0px;width:120.1px;height:26.0px;"></div><div class="t" style="left:762.5px;top:180.2px;width:120.1px;text-align:center;font-size:11px;line-height:14px;color:#1c222a;">Edit Fire Objects</div>
<div class="a btn" style="left:762.5px;top:202.0px;width:120.1px;height:26.0px;"></div><div class="t" style="left:762.5px;top:208.2px;width:120.1px;text-align:center;font-size:11px;line-height:14px;color:#1c222a;">Edit Lights</div>
<div class="a btn" style="left:762.5px;top:230.0px;width:120.1px;height:26.0px;"></div><div class="t" style="left:762.5px;top:236.2px;width:120.1px;text-align:center;font-size:11px;line-height:14px;color:#1c222a;">Edit Commands</div>
<div class="a btn" style="left:762.5px;top:258.0px;width:120.1px;height:26.0px;"></div><div class="t" style="left:762.5px;top:264.2px;width:120.1px;text-align:center;font-size:11px;line-height:14px;color:#1c222a;">Edit Traits</div>
<div class="t " style="left:767.8px;top:364.2px;font-size:11px;line-height:14px;color:#1c222a;">Terrain Class:</div>
<div class="a inp" style="left:766.7px;top:380.0px;width:117.3px;height:20.5px;background:linear-gradient(#e2eaf2,#c4d2e4);border-bottom:1px solid #8898b0;border-right:1px solid #8898b0"></div>
<div class="t " style="left:770.5px;top:383.7px;font-size:11px;line-height:14px;color:#1c222a;">Squad</div>
<div class="a " style="left:865.0px;top:381.5px;width:17.5px;height:17.5px;background:linear-gradient(#f0f4f8,#b8c4d2);border-left:1px solid #9aa8ba"><svg width="17" height="17" style="position:absolute;left:0;top:0"><path d="M5 7h7l-3.5 4z" fill="#101418"/></svg></div>
<div class="a btn" style="left:761.5px;top:410.2px;width:10.5px;height:30.0px;border-right:0"></div>
<div class="t " style="left:446.7px;top:472.9px;font-size:11px;line-height:14px;color:#1c222a;">Modelfile:</div>
<div class="a inp" style="left:504.1px;top:471.3px;width:180.6px;height:16.8px;overflow:hidden"><div class="t" style="left:1px;top:1.5px;">mod:Models/Vehicles/Feuerwehr Fuc</div></div>
<div class="a " style="left:689.7px;top:471.3px;width:60.2px;height:17.5px;border:1px solid #101418;border-top-color:#6a7484;border-left-color:#c8d2de;border-bottom-width:2px;border-right-width:2px;background:linear-gradient(#f0f4f8,#b0bece)"></div>
<div class="a " style="left:725.8px;top:471.3px;width:1.2px;height:17.5px;background:#101418"></div>
<div class="t " style="left:690.5px;top:473.5px;font-size:11px;line-height:14px;color:#101418;letter-spacing:-0.3px;">Browse</div>
<div class="t " style="left:728.5px;top:473.5px;font-size:11px;line-height:14px;color:#101418;letter-spacing:-0.3px;">Edit</div>
<div class="t " style="left:446.7px;top:492.0px;font-size:11px;line-height:14px;color:#98a4b4;">Halfburned:</div>
<div class="a inp dis" style="left:504.1px;top:490.4px;width:180.6px;height:16.5px;"></div>
<div class="a " style="left:689.7px;top:490.4px;width:60.2px;height:17.5px;border:1px solid #101418;border-top-color:#6a7484;border-left-color:#c8d2de;border-bottom-width:2px;border-right-width:2px;background:linear-gradient(#f0f4f8,#b0bece)"></div>
<div class="a " style="left:725.8px;top:490.4px;width:1.2px;height:17.5px;background:#101418"></div>
<div class="t " style="left:690.5px;top:492.6px;font-size:11px;line-height:14px;color:#a0acba;letter-spacing:-0.3px;">Browse</div>
<div class="t " style="left:728.5px;top:492.6px;font-size:11px;line-height:14px;color:#a0acba;letter-spacing:-0.3px;">Edit</div>
<div class="t " style="left:446.7px;top:510.9px;font-size:11px;line-height:14px;color:#98a4b4;">Fullburned:</div>
<div class="a inp dis" style="left:504.1px;top:509.3px;width:180.6px;height:16.5px;"></div>
<div class="a " style="left:689.7px;top:509.3px;width:60.2px;height:17.5px;border:1px solid #101418;border-top-color:#6a7484;border-left-color:#c8d2de;border-bottom-width:2px;border-right-width:2px;background:linear-gradient(#f0f4f8,#b0bece)"></div>
<div class="a " style="left:725.8px;top:509.3px;width:1.2px;height:17.5px;background:#101418"></div>
<div class="t " style="left:690.5px;top:511.5px;font-size:11px;line-height:14px;color:#a0acba;letter-spacing:-0.3px;">Browse</div>
<div class="t " style="left:728.5px;top:511.5px;font-size:11px;line-height:14px;color:#a0acba;letter-spacing:-0.3px;">Edit</div>
<div class="t " style="left:463.9px;top:540.2px;font-size:11px;line-height:14px;color:#1c222a;">Complete:</div>
<div class="a cbf" style="left:521.5px;top:541.7px;width:13.0px;height:12.8px;"></div>
<div class="t " style="left:537.8px;top:540.2px;font-size:11px;line-height:14px;color:#1c222a;">Physics</div>
<div class="a cbf" style="left:583.4px;top:541.7px;width:13.0px;height:12.8px;"></div>
<div class="t " style="left:600.3px;top:540.2px;font-size:11px;line-height:14px;color:#1c222a;">Children</div>
<div class="a cbf" style="left:650.4px;top:541.7px;width:13.0px;height:12.8px;"></div>
<div class="t " style="left:667.0px;top:540.2px;font-size:11px;line-height:14px;color:#1c222a;">Lights</div>
<div class="a cbf" style="left:707.4px;top:541.7px;width:13.0px;height:12.8px;"></div>
<div class="t " style="left:723.7px;top:540.2px;font-size:11px;line-height:14px;color:#1c222a;">Fire</div>
<div class="a cbf" style="left:755.2px;top:541.7px;width:13.0px;height:12.8px;"></div>
<div class="a win" style="left:770.3px;top:406.5px;width:381.4px;height:268.0px;background:linear-gradient(135deg,#94a6bc 0%,#b0c0d4 35%,#c8d6e8 65%,#dbe7f4 100%)"></div>
<div class="a tbar act" style="left:770.3px;top:406.5px;width:381.4px;height:17.0px;"></div>
<div class="t" style="left:770.3px;top:406.7px;width:381.4px;text-align:center;font-size:11px;line-height:14px;color:#080a0c;font-weight:bold;letter-spacing:0px;">Command Editor</div>
<div class="a tbtn" style="left:1137.0px;top:409.0px;width:12.5px;height:11.3px;"><svg width="11" height="10" style="position:absolute;left:0;top:0"><path d="M3.2 3.2C3.2 1.6 4.2 1 5.3 1C6.6 1 7.4 1.8 7.4 2.9C7.4 4.1 6.3 4.5 5.6 5.2L5.4 6.6" fill="none" stroke="#3a4250" stroke-width="1.3"/><rect x="4.7" y="7.4" width="1.4" height="1.4" fill="#3a4250"/></svg></div>
<div class="t " style="left:775.2px;top:429.7px;font-size:11px;line-height:14px;color:#1c222a;letter-spacing:-0.3px;">Available Commands:</div>
<div class="t " style="left:989.1px;top:429.7px;font-size:11px;line-height:14px;color:#1c222a;letter-spacing:-0.3px;">Assigned Commands:</div>
<div class="a list" style="left:774.0px;top:445.3px;width:155.3px;height:142.0px;"></div>
<div class="t " style="left:778.0px;top:447.8px;font-size:11px;line-height:14px;color:#101418;">ab_parken</div>
<div class="t " style="left:778.0px;top:461.8px;font-size:11px;line-height:14px;color:#101418;">ABC_erkunden</div>
<div class="t " style="left:778.0px;top:475.8px;font-size:11px;line-height:14px;color:#101418;">AbortSetPylon</div>
<div class="t " style="left:778.0px;top:489.8px;font-size:11px;line-height:14px;color:#101418;">AcceptsPersonal1</div>
<div class="t " style="left:778.0px;top:503.8px;font-size:11px;line-height:14px;color:#101418;">AcceptsPersonal2</div>
<div class="t " style="left:778.0px;top:517.8px;font-size:11px;line-height:14px;color:#101418;">AcceptsPersonal3</div>
<div class="t " style="left:778.0px;top:531.8px;font-size:11px;line-height:14px;color:#101418;">ActionEmptyPF</div>
<div class="t " style="left:778.0px;top:545.8px;font-size:11px;line-height:14px;color:#101418;">Activate_Cannon</div>
<div class="t " style="left:778.0px;top:559.8px;font-size:11px;line-height:14px;color:#101418;">Aim</div>
<div class="a vsb" style="left:913.8px;top:446.3px;width:13.0px;height:127.0px;"></div>
<svg class="a" width="13" height="10" style="left:913.8px;top:448.3px"><path d="M2.5 7h8l-4-5z" fill="#101418"/></svg>
<svg class="a" width="13" height="10" style="left:913.8px;top:563.3px"><path d="M2.5 2h8l-4 5z" fill="#101418"/></svg>
<div class="a thumb" style="left:914.8px;top:456.4px;width:11.0px;height:11.7px;"></div>
<div class="a hsb" style="left:775.0px;top:574.3px;width:138.8px;height:11.5px;"></div>
<svg class="a" width="10" height="12" style="left:776.0px;top:574.3px"><path d="M7 2v8l-5-4z" fill="#101418"/></svg>
<svg class="a" width="10" height="12" style="left:902.8px;top:574.3px"><path d="M3 2v8l5-4z" fill="#101418"/></svg>
<div class="a hthumb" style="left:786.6px;top:576.3px;width:91.2px;height:7.5px;"></div>
<div class="a " style="left:913.8px;top:573.3px;width:14.5px;height:13.0px;background:linear-gradient(135deg,#aebcce,#c8d4e2)"></div>
<div class="a list" style="left:989.0px;top:445.3px;width:155.0px;height:142.0px;"></div>
<div class="t " style="left:993.3px;top:447.8px;font-size:11px;line-height:14px;color:#101418;">EmptyCar</div>
<div class="t " style="left:993.3px;top:461.8px;font-size:11px;line-height:14px;color:#101418;">GoHome</div>
<div class="t " style="left:993.3px;top:475.8px;font-size:11px;line-height:14px;color:#101418;">MoveTo</div>
<div class="t " style="left:993.3px;top:489.8px;font-size:11px;line-height:14px;color:#101418;">VCmdInit</div>
<div class="t " style="left:993.3px;top:503.8px;font-size:11px;line-height:14px;color:#101418;">VCmdSiren</div>
<div class="t " style="left:993.3px;top:517.8px;font-size:11px;line-height:14px;color:#101418;">VCmdAutoSirenOff</div>
<div class="t " style="left:993.3px;top:531.8px;font-size:11px;line-height:14px;color:#101418;">ICH_HABE_PA</div>
<div class="t " style="left:993.3px;top:545.8px;font-size:11px;line-height:14px;color:#101418;">ICH_HABE_HS</div>
<div class="t " style="left:993.3px;top:559.8px;font-size:11px;line-height:14px;color:#101418;">ICH_HABE_CSA2</div>
<div class="a vsb" style="left:1128.5px;top:446.3px;width:13.0px;height:127.0px;"></div>
<svg class="a" width="13" height="10" style="left:1128.5px;top:448.3px"><path d="M2.5 7h8l-4-5z" fill="#101418"/></svg>
<svg class="a" width="13" height="10" style="left:1128.5px;top:563.3px"><path d="M2.5 2h8l-4 5z" fill="#101418"/></svg>
<div class="a thumb" style="left:1129.5px;top:456.4px;width:11.0px;height:47.0px;"></div>
<div class="a hsb" style="left:990.0px;top:574.3px;width:138.5px;height:11.5px;"></div>
<svg class="a" width="10" height="12" style="left:991.0px;top:574.3px"><path d="M7 2v8l-5-4z" fill="#101418"/></svg>
<svg class="a" width="10" height="12" style="left:1117.5px;top:574.3px"><path d="M3 2v8l5-4z" fill="#101418"/></svg>
<div class="a hthumb" style="left:1001.4px;top:576.3px;width:109.3px;height:7.5px;"></div>
<div class="a " style="left:1128.5px;top:573.3px;width:14.5px;height:13.0px;background:linear-gradient(135deg,#aebcce,#c8d4e2)"></div>
<div class="a btn" style="left:935.6px;top:494.0px;width:47.8px;height:16.6px;"></div><div class="t" style="left:935.6px;top:495.2px;width:47.8px;text-align:center;font-size:11px;line-height:14px;color:#1c222a;">-&gt;</div>
<div class="a btn" style="left:935.6px;top:522.3px;width:47.8px;height:16.3px;"></div><div class="t" style="left:935.6px;top:523.2px;width:47.8px;text-align:center;font-size:11px;line-height:14px;color:#1c222a;">&lt;-</div>
<div class="a btn" style="left:990.2px;top:591.9px;width:69.8px;height:15.2px;"></div><div class="t" style="left:990.2px;top:592.7px;width:69.8px;text-align:center;font-size:11px;line-height:14px;color:#1c222a;">Up</div>
<div class="a btn" style="left:1074.6px;top:591.9px;width:69.8px;height:15.2px;"></div><div class="t" style="left:1074.6px;top:592.7px;width:69.8px;text-align:center;font-size:11px;line-height:14px;color:#1c222a;">Down</div>
<div class="t " style="left:776.2px;top:594.0px;font-size:11px;line-height:14px;color:#1c222a;">New Command:</div>
<div class="a inp" style="left:776.3px;top:610.0px;width:123.7px;height:16.7px;"></div>
<div class="a btn" style="left:903.3px;top:609.6px;width:49.4px;height:17.1px;"></div><div class="t" style="left:903.3px;top:611.2px;width:49.4px;text-align:center;font-size:11px;line-height:14px;color:#1c222a;">Assign</div>
<div class="t " style="left:1017.3px;top:622.2px;font-size:11px;line-height:14px;color:#1c222a;">For all objects of this</div>
<div class="t " style="left:1017.3px;top:635.1px;font-size:11px;line-height:14px;color:#1c222a;">prototype:</div>
<div class="a btn" style="left:776.7px;top:644.6px;width:69.8px;height:25.8px;"></div><div class="t" style="left:776.7px;top:650.7px;width:69.8px;text-align:center;font-size:11px;line-height:14px;color:#1c222a;">Ok</div>
<div class="a btn" style="left:851.7px;top:644.6px;width:69.8px;height:25.8px;"></div><div class="t" style="left:851.7px;top:650.7px;width:69.8px;text-align:center;font-size:11px;line-height:14px;color:#1c222a;">Cancel</div>
<div class="a btn" style="left:1016.7px;top:650.2px;width:126.6px;height:17.7px;"></div>
<div class="t" style="left:1016.7px;top:652.2px;width:124.6px;text-align:center;font-size:11px;line-height:14px;color:#1c222a;letter-spacing:-0.4px;">Assign this command set</div>
<svg class="a" width="16" height="22" style="left:1132px;top:441px"><path d="M1.5 1.5L1.5 15L5 11.5L8 18L10.5 17L7.5 10.5L12.5 10.5Z" fill="#e8ecf0" stroke="#202428" stroke-width="1.2" stroke-linejoin="round"/></svg>
<div class="a win" style="left:1622.8px;top:34.0px;width:284.5px;height:515.4px;background:linear-gradient(160deg,#93a3b8 0%,#a8b6c8 40%,#b8c6d6 70%,#c6d2de 100%)"></div>
<div class="a tbar" style="left:1622.8px;top:34.0px;width:284.5px;height:15.0px;"></div>
<div class="t" style="left:1622.8px;top:34.1px;width:284.5px;text-align:center;font-size:11px;line-height:14px;color:#6a7484;">Prototypes</div>
<div class="a tbtn" style="left:1876.3px;top:36.0px;width:12.3px;height:11.0px;"><svg width="11" height="10" style="position:absolute;left:0;top:0"><path d="M3.2 3.2C3.2 1.6 4.2 1 5.3 1C6.6 1 7.4 1.8 7.4 2.9C7.4 4.1 6.3 4.5 5.6 5.2L5.4 6.6" fill="none" stroke="#3a4250" stroke-width="1.3"/><rect x="4.7" y="7.4" width="1.4" height="1.4" fill="#3a4250"/></svg></div>
<div class="a tbtn" style="left:1893.8px;top:36.0px;width:11.3px;height:11.0px;"></div>
<div class="a tab" style="left:1625.5px;top:53.4px;width:69.2px;height:24.3px;"></div>
<div class="t" style="left:1625.5px;top:58.2px;width:67.2px;text-align:center;font-size:11px;line-height:14px;color:#1c222a;">Objects</div>
<div class="a tab on" style="left:1694.7px;top:53.4px;width:69.7px;height:24.3px;"></div>
<div class="t" style="left:1694.7px;top:59.2px;width:67.7px;text-align:center;font-size:11px;line-height:14px;color:#101418;font-weight:bold;">Vehicles</div>
<div class="a tab" style="left:1764.4px;top:53.4px;width:70.2px;height:24.3px;"></div>
<div class="t" style="left:1764.4px;top:58.2px;width:68.2px;text-align:center;font-size:11px;line-height:14px;color:#1c222a;">Persons</div>
<div class="a tab" style="left:1834.6px;top:53.4px;width:70.5px;height:24.3px;"></div>
<div class="t" style="left:1834.6px;top:58.2px;width:68.5px;text-align:center;font-size:11px;line-height:14px;color:#1c222a;">Houses</div>
<div class="t " style="left:1627.2px;top:81.1px;font-size:11px;line-height:14px;color:#1c222a;">Groups</div>
<div class="a list" style="left:1627.6px;top:97.1px;width:202.1px;height:85.9px;background:linear-gradient(135deg,#e4ecf4 0%,#c0cede 45%,#a8b6c8 100%)"></div>
<div class="a sel" style="left:1631.2px;top:98.7px;width:181.2px;height:12.2px;"></div>
<div class="t " style="left:1648.2px;top:98.4px;font-size:11px;line-height:14px;color:#ffffff;font-weight:bold;">Feuerwehr</div>
<div class="t " style="left:1632.0px;top:114.0px;font-size:11px;line-height:14px;color:#101418;">__</div>
<div class="t " style="left:1645.8px;top:113.0px;font-size:11px;line-height:14px;color:#101418;">Flughafen Feuerwehr</div>
<div class="t " style="left:1632.0px;top:128.0px;font-size:11px;line-height:14px;color:#101418;">__</div>
<div class="t " style="left:1645.8px;top:127.0px;font-size:11px;line-height:14px;color:#101418;">Light Import</div>
<div class="t " style="left:1632.0px;top:142.0px;font-size:11px;line-height:14px;color:#101418;">__</div>
<div class="t " style="left:1645.8px;top:141.0px;font-size:11px;line-height:14px;color:#101418;">Netzbetreiber</div>
<div class="t " style="left:1632.0px;top:156.0px;font-size:11px;line-height:14px;color:#101418;">__</div>
<div class="t " style="left:1645.8px;top:155.0px;font-size:11px;line-height:14px;color:#101418;">Polizei</div>
<div class="t " style="left:1645.8px;top:169.0px;font-size:11px;line-height:14px;color:#101418;">TechOra</div>
<div class="a vsb" style="left:1815.2px;top:98.5px;width:11.3px;height:83.5px;"></div>
<svg class="a" width="12" height="10" style="left:1815px;top:100px"><path d="M2 7h8l-4-5z" fill="#101418"/></svg>
<svg class="a" width="12" height="10" style="left:1815px;top:170px"><path d="M2 2h8l-4 5z" fill="#101418"/></svg>
<div class="a thumb" style="left:1816.2px;top:109.3px;width:9.3px;height:10.5px;"></div>
<div class="a btn" style="left:1832.2px;top:97.9px;width:70.5px;height:25.1px;"></div><div class="t" style="left:1832.2px;top:103.7px;width:70.5px;text-align:center;font-size:11px;line-height:14px;color:#1c222a;">New</div>
<div class="a" style="left:1627px;top:200px;width:197px;height:344px;overflow:hidden">
<div class="a item" style="left:0.0px;top:1.4px;width:196.4px;height:26.0px;"></div>
<div class="t " style="left:2.0px;top:3.6px;font-size:11px;line-height:14px;color:#101418;letter-spacing:-0.3px;">00_99_01</div>
<div class="a item" style="left:0.0px;top:27.3px;width:196.4px;height:26.0px;"></div>
<div class="t " style="left:2.0px;top:29.5px;font-size:11px;line-height:14px;color:#101418;letter-spacing:-0.3px;">01_11_01</div>
<div class="a item" style="left:0.0px;top:53.2px;width:196.4px;height:26.0px;"></div>
<div class="t " style="left:2.0px;top:55.4px;font-size:11px;line-height:14px;color:#101418;letter-spacing:-0.3px;">01_11_01_DUMMY</div>
<div class="a item" style="left:0.0px;top:79.1px;width:196.4px;height:26.0px;"></div>
<div class="t " style="left:2.0px;top:81.3px;font-size:11px;line-height:14px;color:#101418;letter-spacing:-0.3px;">01_19_01</div>
<div class="a item" style="left:0.0px;top:105.0px;width:196.4px;height:26.0px;"></div>
<div class="t " style="left:2.0px;top:107.2px;font-size:11px;line-height:14px;color:#101418;letter-spacing:-0.3px;">01_33_01</div>
<div class="a item" style="left:0.0px;top:130.9px;width:196.4px;height:26.0px;"></div>
<div class="t " style="left:2.0px;top:133.1px;font-size:11px;line-height:14px;color:#101418;letter-spacing:-0.3px;">01_33_01</div>
<div class="a item on" style="left:0.0px;top:156.8px;width:196.4px;height:26.0px;"></div>
<div class="t " style="left:2.0px;top:159.0px;font-size:11px;line-height:14px;color:#d4dae0;letter-spacing:-0.3px;">01_44_01</div>
<div class="a item" style="left:0.0px;top:182.7px;width:196.4px;height:26.0px;"></div>
<div class="t " style="left:2.0px;top:184.9px;font-size:11px;line-height:14px;color:#101418;letter-spacing:-0.3px;">01_46_01</div>
<div class="a item" style="left:0.0px;top:208.6px;width:196.4px;height:26.0px;"></div>
<div class="t " style="left:2.0px;top:210.8px;font-size:11px;line-height:14px;color:#101418;letter-spacing:-0.3px;">01_56_01</div>
<div class="a item" style="left:0.0px;top:234.5px;width:196.4px;height:26.0px;"></div>
<div class="t " style="left:2.0px;top:236.7px;font-size:11px;line-height:14px;color:#101418;letter-spacing:-0.3px;">01_58_01</div>
<div class="a item" style="left:0.0px;top:260.4px;width:196.4px;height:26.0px;"></div>
<div class="t " style="left:2.0px;top:262.6px;font-size:11px;line-height:14px;color:#101418;letter-spacing:-0.3px;">01_59_01_DUMMY</div>
<div class="a item" style="left:0.0px;top:286.3px;width:196.4px;height:26.0px;"></div>
<div class="t " style="left:2.0px;top:288.5px;font-size:11px;line-height:14px;color:#101418;letter-spacing:-0.3px;">01_74_01</div>
<div class="a item" style="left:0.0px;top:312.2px;width:196.4px;height:26.0px;"></div>
<div class="t " style="left:2.0px;top:314.4px;font-size:11px;line-height:14px;color:#101418;letter-spacing:-0.3px;">01_79_01</div>
<div class="a item" style="left:0.0px;top:338.1px;width:196.4px;height:26.0px;"></div>
</div>
<div class="a vsb" style="left:1824.3px;top:200.0px;width:11.5px;height:344.0px;"></div>
<svg class="a" width="12" height="10" style="left:1824px;top:201px"><path d="M2 7h8l-4-5z" fill="#101418"/></svg>
<svg class="a" width="12" height="10" style="left:1824px;top:533px"><path d="M2 2h8l-4 5z" fill="#101418"/></svg>
<div class="a thumb" style="left:1825.3px;top:205.8px;width:9.5px;height:73.9px;"></div>
<div class="a btn" style="left:1839.3px;top:202.0px;width:62.1px;height:25.0px;"></div><div class="t" style="left:1839.3px;top:207.7px;width:62.1px;text-align:center;font-size:11px;line-height:14px;color:#1c222a;">New</div>
<div class="a btn" style="left:1839.3px;top:232.2px;width:62.1px;height:24.6px;"></div><div class="t" style="left:1839.3px;top:237.9px;width:62.1px;text-align:center;font-size:11px;line-height:14px;color:#1c222a;">Edit</div>
<div class="a btn" style="left:1839.3px;top:262.1px;width:62.1px;height:24.6px;"></div><div class="t" style="left:1839.3px;top:267.8px;width:62.1px;text-align:center;font-size:11px;line-height:14px;color:#1c222a;">Clone</div>
<div class="a cb" style="left:1840.2px;top:292.0px;width:13.0px;height:13.0px;"></div>
<div class="t " style="left:1856.9px;top:290.9px;font-size:11px;line-height:14px;color:#1c222a;">Previews</div>
</body></html>
